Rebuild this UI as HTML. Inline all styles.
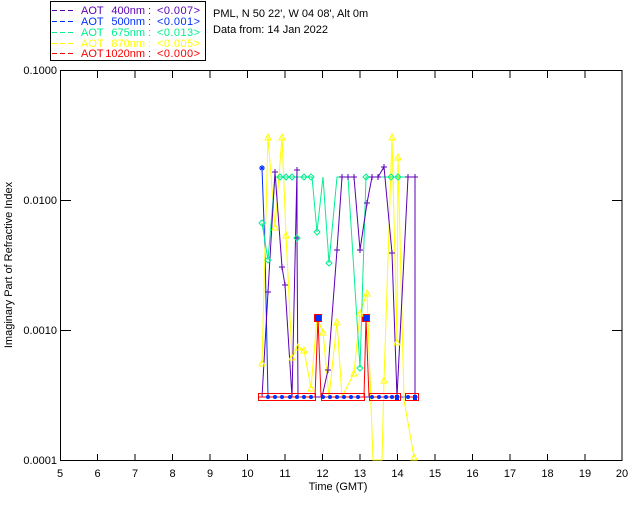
<!DOCTYPE html>
<html><head><meta charset="utf-8"><style>
html,body{margin:0;padding:0;background:#fff;width:640px;height:512px;overflow:hidden}
svg text{font-family:"Liberation Sans",sans-serif;font-size:11px}
</style></head><body>
<svg width="640" height="512" xmlns="http://www.w3.org/2000/svg">
<rect x="50.5" y="1.5" width="155" height="59" fill="#fff" stroke="#000"/>
<g font-size="11">
<g fill="#5a00b4"><rect x="52" y="10" width="5" height="1"/><rect x="60" y="10" width="5" height="1"/><rect x="68" y="10" width="5" height="1"/><text x="81" y="14">AOT</text><text x="145" y="14" text-anchor="end">400nm</text><text x="148" y="14">:</text><text x="157" y="14" textLength="43">&lt;0.007&gt;</text></g>
<g fill="#0030ff"><rect x="52" y="21" width="5" height="1"/><rect x="60" y="21" width="5" height="1"/><rect x="68" y="21" width="5" height="1"/><text x="81" y="25">AOT</text><text x="145" y="25" text-anchor="end">500nm</text><text x="148" y="25">:</text><text x="157" y="25" textLength="43">&lt;0.001&gt;</text></g>
<g fill="#00f090"><rect x="52" y="32" width="5" height="1"/><rect x="60" y="32" width="5" height="1"/><rect x="68" y="32" width="5" height="1"/><text x="81" y="36">AOT</text><text x="145" y="36" text-anchor="end">675nm</text><text x="148" y="36">:</text><text x="157" y="36" textLength="43">&lt;0.013&gt;</text></g>
<g fill="#ffff00"><rect x="52" y="43" width="5" height="1"/><rect x="60" y="43" width="5" height="1"/><rect x="68" y="43" width="5" height="1"/><text x="81" y="47">AOT</text><text x="145" y="47" text-anchor="end">870nm</text><text x="148" y="47">:</text><text x="157" y="47" textLength="43">&lt;0.005&gt;</text></g>
<g fill="#ff0000"><rect x="52" y="53" width="5" height="1"/><rect x="60" y="53" width="5" height="1"/><rect x="68" y="53" width="5" height="1"/><text x="81" y="57">AOT</text><text x="145" y="57" text-anchor="end">1020nm</text><text x="148" y="57">:</text><text x="157" y="57" textLength="43">&lt;0.000&gt;</text></g>
</g>
<text x="213" y="17" fill="#000">PML, N 50 22', W 04 08', Alt 0m</text>
<text x="213" y="33" fill="#000">Data from: 14 Jan 2022</text>
<rect x="60.5" y="70.5" width="561.5" height="390" fill="none" stroke="#000"/>
<g stroke="#000">
<path d="M97.5 461v-7M135 461v-7M172.5 461v-7M210 461v-7M247.5 461v-7M285 461v-7M322.5 461v-7M360 461v-7M397.5 461v-7M435 461v-7M472.5 461v-7M510 461v-7M547.5 461v-7M585 461v-7"/>
<path d="M97.5 71v7M135 71v7M172.5 71v7M210 71v7M247.5 71v7M285 71v7M322.5 71v7M360 71v7M397.5 71v7M435 71v7M472.5 71v7M510 71v7M547.5 71v7M585 71v7"/>
<path d="M61 200.5h10M61 330.5h10M622 200.5h-10M622 330.5h-10"/>
</g>
<g text-anchor="end"><text x="57" y="74">0.1000</text><text x="57" y="204">0.0100</text><text x="57" y="334">0.0010</text><text x="57" y="464">0.0001</text></g>
<g text-anchor="middle">
<text x="60" y="477">5</text><text x="97.5" y="477">6</text><text x="135" y="477">7</text><text x="172.5" y="477">8</text><text x="210" y="477">9</text><text x="247.5" y="477">10</text><text x="285" y="477">11</text><text x="322.5" y="477">12</text><text x="360" y="477">13</text><text x="397.5" y="477">14</text><text x="435" y="477">15</text><text x="472.5" y="477">16</text><text x="510" y="477">17</text><text x="547.5" y="477">18</text><text x="585" y="477">19</text><text x="622" y="477">20</text>
<text x="338" y="490">Time (GMT)</text>
<text transform="translate(12 265) rotate(-90)">Imaginary Part of Refractive Index</text>
</g>
<g fill="none" stroke-width="1">
<polyline stroke="#0030ff" points="262,168 265,250 268,397 415,397"/>
<polyline stroke="#ffff00" points="262,363 268,137 275,227 282,137 286,235 292,357 298,347 304,350 311,388 317,318 323,332 329,397 337,322 342,397 354,373 360,313 367,293 373,460 378,460 382,460 384,380 392,137 397,342 398,157 404,400 414,457"/>
<polyline stroke="#00f090" points="262,223 268,260 275,177 312,177 317,232 323,177 329,263 337,177 348,177 360,368 366,177 398,177 408,177 415,177"/>
<polyline stroke="#5a00b4" points="262,397 268,292 275,172 282,267 285,285 292,397 297,170 297,238 298,397 322,397 328,370 337,250 342,177 354,177 360,250 367,203 372,177 378,177 384,167 392,253 397,397 408,177 415,177 415,397"/>
<polyline stroke="#ff0000" points="258,397 315,397 318,318 321,397 364,397 366,318 369,397 400,397"/>
<polyline stroke="#ff0000" points="405,397 418,397"/>
</g>
<g stroke="#ff0000" fill="#0030ff">
<rect x="258.5" y="393.5" width="57" height="7" fill="none"/>
<rect x="321.5" y="393.5" width="43" height="7" fill="none"/>
<rect x="369.5" y="393.5" width="31" height="7" fill="none"/>
<rect x="405.5" y="393.5" width="13" height="7" fill="none"/>
<rect x="314.5" y="314.5" width="7" height="7"/>
<rect x="362.5" y="314.5" width="7" height="7"/>
</g>
<g fill="#0030ff">
<circle cx="268" cy="397" r="2"/><circle cx="275" cy="397" r="2"/><circle cx="282" cy="397" r="2"/><circle cx="290" cy="397" r="2"/><circle cx="297" cy="397" r="2"/><circle cx="304" cy="397" r="2"/><circle cx="311" cy="397" r="2"/>
<circle cx="323" cy="397" r="2"/><circle cx="330" cy="397" r="2"/><circle cx="337" cy="397" r="2"/><circle cx="344" cy="397" r="2"/><circle cx="351" cy="397" r="2"/><circle cx="358" cy="397" r="2"/>
<circle cx="372" cy="397" r="2"/><circle cx="379" cy="397" r="2"/><circle cx="386" cy="397" r="2"/><circle cx="392" cy="397" r="2"/><rect x="395" y="395" width="4" height="5"/>
<circle cx="408" cy="397" r="2"/><rect x="413" y="395" width="4" height="5"/>
</g>
<g stroke="#5a00b4" fill="none">
<path d="M272 172h6M275 169v6M294 170h6M297 167v6M294 238h6M297 235v6M279 267h6M282 264v6M265 292h6M268 289v6M282 285h6M285 282v6M325 370h6M328 367v6M334 250h6M337 247v6M339 177h6M342 174v6M345 177h6M348 174v6M351 177h6M354 174v6M357 250h6M360 247v6M364 203h6M367 200v6M369 177h6M372 174v6M375 177h6M378 174v6M381 167h6M384 164v6M389 253h6M392 250v6M405 177h6M408 174v6M412 177h6M415 174v6"/>
</g>
<g stroke="#0030ff"><path d="M259 168h6M262 165v6M260 166l4 4M264 166l-4 4"/></g>
<g stroke="#00f090" fill="none">
<path d="M262 220l3 3-3 3-3-3zM268 257l3 3-3 3-3-3zM317 229l3 3-3 3-3-3zM329 260l3 3-3 3-3-3zM360 365l3 3-3 3-3-3zM297 235l3 3-3 3-3-3zM280 174l3 3-3 3-3-3zM286 174l3 3-3 3-3-3zM292 174l3 3-3 3-3-3zM304 174l3 3-3 3-3-3zM311 174l3 3-3 3-3-3zM366 174l3 3-3 3-3-3zM391 174l3 3-3 3-3-3zM398 174l3 3-3 3-3-3z"/>
</g>
<g stroke="#ffff00" fill="none">
<path d="M265,140l3,-6 3,6zM279,140l3,-6 3,6zM272,230l3,-6 3,6zM283,238l3,-6 3,6zM289,360l3,-6 3,6zM295,350l3,-6 3,6zM301,353l3,-6 3,6zM308,391l3,-6 3,6zM320,335l3,-6 3,6zM334,325l3,-6 3,6zM351,376l3,-6 3,6zM357,316l3,-6 3,6zM364,296l3,-6 3,6zM381,383l3,-6 3,6zM389,140l3,-6 3,6zM394,345l3,-6 3,6zM395,160l3,-6 3,6zM411,460l3,-6 3,6zM259,366l3,-6 3,6z"/>
</g>
</svg>
</body></html>
